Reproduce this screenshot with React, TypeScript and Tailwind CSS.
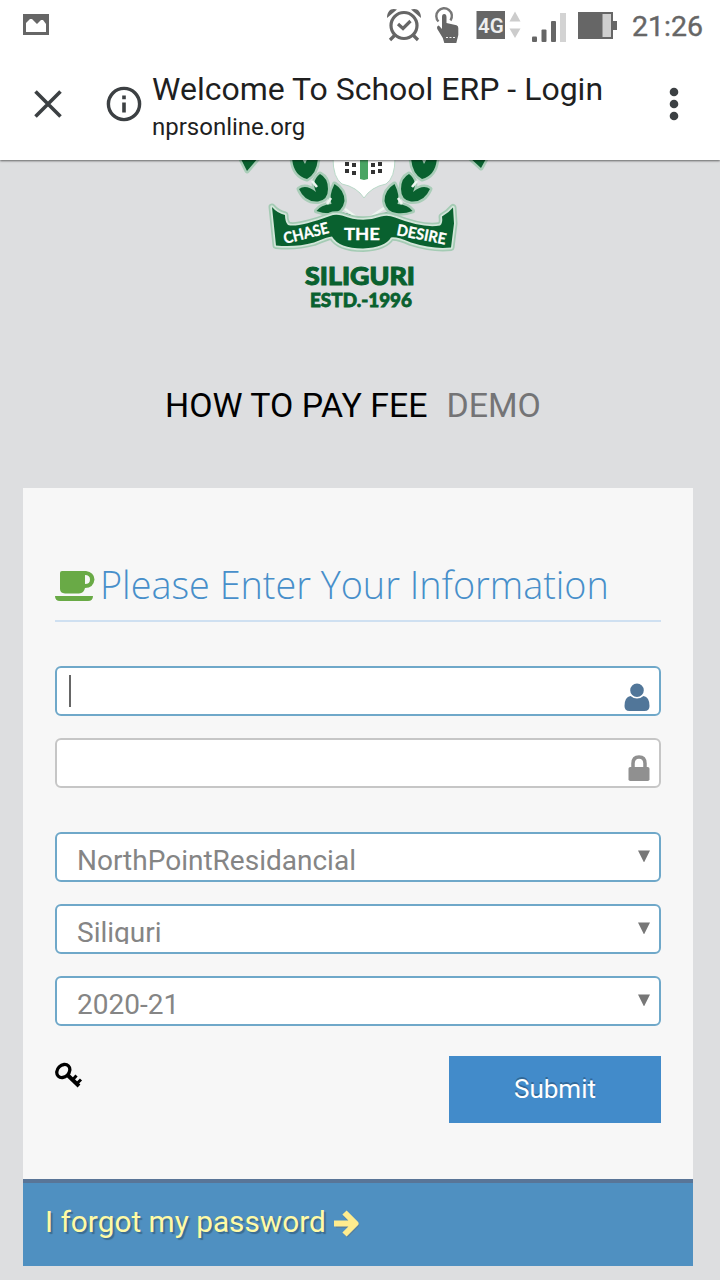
import type { ReactNode } from "react";

function StatusBar() {
  return (
    <div className="flex h-[50px] items-start text-[#666]">
      <svg className="ml-[23px] mt-[14px] h-[21px] w-[26px]" viewBox="0 0 26 21">
        <path fill="currentColor" d="M0 0h26v21H0z" />
        <path fill="#fff" d="M3 18V9l4-4h2l5 5 4-4h2l3 4v8z" />
      </svg>
      <svg className="ml-auto h-[50px] w-[236px]" viewBox="384 0 236 50">
        <g fill="none" stroke="#666" strokeWidth="3.200">
          <circle cx="404" cy="25.500" r="13" />
          <path d="m395 35-5 5M413 35l5 5" />
          <path d="m398 24 5 4.500 7.500-7.500" />
        </g>
        <path fill="#666" d="M387 18c0-7 4-10.500 10-8.500zM421 18c0-7-4-10.500-10-8.500z" />
        <path fill="none" stroke="#777" strokeWidth="2.400" d="M438.500 21.500a7.800 7.800 0 1 1 12-1" />
        <path fill="#666" d="M442 17q0-3 2.200-3t2.300 3v6l10 2.200q1.800.7 1.800 2.800v7l-2 8h-12l-1.500-5-5.500-9q-1-3 1.500-3.500l3.200 3.500z" />
        <path stroke="#eee" strokeDasharray="2 1.500" d="M446 37.500h9" />
        <path fill="#666" d="M476.500 11h28.500v28h-28.500z" />
        <text x="490.800" y="32.500" fill="#eee" fontFamily="Roboto" fontSize="20.500" fontWeight="600" textAnchor="middle">4G</text>
        <path fill="#ccc" d="m509.500 21.500 5.500-10 5.500 10zM509.500 28.500h11L515 38z" />
        <g fill="#666">
          <rect x="532" y="36.500" width="5" height="5.500" rx="1" />
          <rect x="541.500" y="29.500" width="5" height="12.500" rx="1" />
          <rect x="551" y="21" width="5" height="21" rx="1" />
        </g>
        <path fill="#d3d3d3" d="M560 13h6v29h-6z" />
        <path fill="#666" d="M578 12h35v27h-35zM613 21h4v9h-4z" />
        <path fill="#cfcfcf" d="M602.500 14h8.500v23h-8.500z" />
      </svg>
      <span className="ml-[12px] w-[88px] pt-[10px] text-[28.500px] leading-[34px] whitespace-nowrap [-webkit-text-stroke:0.400px_#666]">
        21:26
      </span>
    </div>
  );
}

function BrowserBar() {
  return (
    <div className="flex h-[110px] items-start text-[#1f1f1f]">
      <svg className="ml-[34px] mt-[40px] h-[28px] w-[28px]" viewBox="0 0 28 28">
        <path stroke="#3c4043" strokeWidth="3.600" d="m1.500 1.500 25 25M26.500 1.500l-25 25" />
      </svg>
      <svg className="ml-[44px] mt-[36px] h-[36px] w-[36px]" viewBox="0 0 36 36">
        <circle cx="18" cy="18" r="15.600" fill="none" stroke="#3c4043" strokeWidth="3.400" />
        <path fill="#3c4043" d="M16.200 9.500h3.600v3.700h-3.600zM16.200 16.500h3.600v10h-3.600z" />
      </svg>
      <div className="ml-[10px] flex flex-col whitespace-nowrap">
        <span className="mt-[20px] h-[38px] text-[32px] leading-[38px]">Welcome To School ERP - Login</span>
        <span className="mt-[4px] text-[24px] leading-[30px]">nprsonline.org</span>
      </div>
      <svg className="ml-auto mr-[41px] mt-[37px] h-[34px] w-[10px]" viewBox="0 0 10 34">
        <g fill="#3c4043">
          <circle cx="5" cy="5" r="4.300" />
          <circle cx="5" cy="17" r="4.300" />
          <circle cx="5" cy="29" r="4.300" />
        </g>
      </svg>
    </div>
  );
}

function Branch() {
  return (
    <>
      <path d="M292 155q0 20 15 24 11-6 11-24h-9l-4 9-5-9z" />
      <path d="M299 189q7-5 17 3-5-11 4-18 8 4 8 15 0 11-10 12.500-13 1-19-12.500z" />
      <path d="M334.500 184q10 6 10 17-2 11-12 12-8 1-16-2 4-6 15-7-3-8 3-20z" />
    </>
  );
}

function Crest() {
  return (
    <svg className="h-[155px] w-[260px]" viewBox="230 160 260 155">
      <path fill="#fff" stroke="#b9d9c8" d="M333 158q0 20 9 26 15 3 22 14 7-11 22-14 9-6 9-26z" />
      <path fill="#4aa564" d="M360 158h8v21l-4 1-4-1z" />
      <g fill="#333">
        <path d="M345 162h4v4h-4zM352 163h4v4h-4zM345 169h4v4h-4zM352 171h4v4h-4zM371 163h4v4h-4zM378 162h4v4h-4zM371 170h4v4h-4zM378 169h4v4h-4z" />
      </g>
      <g fill="#09612f" stroke="#a9cdb8" strokeWidth="5" paintOrder="stroke" strokeLinejoin="round">
        <path d="m240 157 7 14 12-14zM487 157l-6 11-12-11z" />
        <Branch />
        <g transform="matrix(-1 0 0 1 729 0)">
          <Branch />
        </g>
      </g>
      <path fill="#09612f" d="m341 212 12 3 6 6-8-1zM388 212l-12 3-8 6 9-1z" />
      <path fill="none" stroke="#eef6f0" strokeWidth="2.600" d="m345 209 18 13 21-14M312 181l5 6M331 198l-4 6M417 181l-5 6M398 198l4 6" />
      <path
        fill="#09612f"
        stroke="#a4cbb4"
        strokeWidth="7"
        paintOrder="stroke"
        strokeLinejoin="round"
        d="M272 207q5 6 13 8 0 7 3 10 9 3 42-9 5-2 12-.500 20 8 39 1 7-2 14 1 28 11 45 8 3-2 2-9 7-4 11-9l1 16-3 24q-18 2-40-5-14-6-20-5-6 10-28 11-24 0-31-12-4 0-18 6-18 5-38 3z"
      />
      <path
        fill="#09612f"
        stroke="#d3e6da"
        strokeWidth="3.500"
        paintOrder="stroke"
        strokeLinejoin="round"
        d="M272 207q5 6 13 8 0 7 3 10 9 3 42-9 5-2 12-.500 20 8 39 1 7-2 14 1 28 11 45 8 3-2 2-9 7-4 11-9l1 16-3 24q-18 2-40-5-14-6-20-5-6 10-28 11-24 0-31-12-4 0-18 6-18 5-38 3z"
      />
      <g fill="#fff" stroke="#fff" strokeWidth=".3" fontFamily="Lato, sans-serif" fontWeight="700" fontSize="15.500">
        <text transform="translate(285 244) rotate(-14)" textLength="46" lengthAdjust="spacingAndGlyphs">CHASE</text>
        <text x="344" y="240" fontSize="17" textLength="36" lengthAdjust="spacingAndGlyphs">THE</text>
        <text transform="translate(396 235) rotate(11)" textLength="50" lengthAdjust="spacingAndGlyphs">DESIRE</text>
      </g>
      <g fill="#09612f" stroke="#09612f" fontFamily="Lato, sans-serif" fontWeight="900">
        <text x="305" y="284.500" fontSize="25" strokeWidth="1" textLength="110" lengthAdjust="spacingAndGlyphs">SILIGURI</text>
        <text x="310" y="306.500" fontSize="19.500" strokeWidth=".8" textLength="102" lengthAdjust="spacingAndGlyphs">ESTD.-1996</text>
      </g>
    </svg>
  );
}

function Field({ tone, children }: { tone: string; children: ReactNode }) {
  return <div className={`flex h-[50px] items-start rounded-md border-2 bg-white ${tone}`}>{children}</div>;
}

function SelectField({ value, clip = "h-[36px]" }: { value: string; clip?: string }) {
  return (
    <Field tone="border-[#6fa8c9]">
      <span className={`ml-[20px] mt-[9px] text-[28px] leading-[36px] whitespace-nowrap text-[#858585] ${clip}`}>
        {value}
      </span>
      <svg className="ml-auto mr-[9px] mt-[16px] h-[12px] w-[12px]" viewBox="0 0 12 12">
        <path fill="#777" d="M0 .5h12L6 12.500z" />
      </svg>
    </Field>
  );
}

function LoginCard() {
  return (
    <div className="ml-[23px] mt-[62px] w-[670px] bg-[#f7f7f7]">
      <div className="h-[691px] px-[32px] pt-[70px]">
        <div className="flex h-[64px] items-start border-b-2 border-[#cfe0f1]">
          <svg className="mt-[13px] h-[31px] w-[40px]" viewBox="0 0 40 31">
            <path
              fill="#69aa46"
              fillRule="evenodd"
              d="M5 2q0-2 2-2h24q8 1 8.500 8.500Q38.500 17 30 17q-1 5-6 5.500H10Q5 22 5 18zM30 4v9q5 0 5-4.500T30 4zM0 25h38q0 5-5 5H5q-5 0-5-5z"
            />
          </svg>
          <h4 className="ml-[5px] font-['Open_Sans'] text-[37.800px] font-light leading-[53px] whitespace-nowrap text-[#478fca]">
            Please Enter Your Information
          </h4>
        </div>
        <div className="mt-[44px] flex flex-col gap-[22px]">
          <Field tone="border-[#6fa8c9]">
            <span className="ml-[12px] mt-[7px] h-[32px] w-[2px] bg-[#666]" />
            <svg className="ml-auto mr-[9px] mt-[15px] h-[28px] w-[26px]" viewBox="0 0 26 28">
              <path
                fill="#517699"
                d="M13 .5a6.800 6.800 0 1 1 0 13.600 6.800 6.800 0 0 1 0-13.600zM6.500 13q6.500 5 13 0Q25.500 14 25.500 23q0 5-5 5h-15q-5 0-5-5 0-9 6-10z"
              />
            </svg>
          </Field>
          <Field tone="border-[#c6c6c6]">
            <svg className="ml-auto mr-[9px] mt-[15px] h-[26px] w-[22px]" viewBox="0 0 22 26">
              <path fill="none" stroke="#909090" strokeWidth="3.500" d="M5 13V8.500q0-6.500 6-6.500t6 6.500V13" />
              <rect x=".5" y="12" width="21" height="14" rx="1.800" fill="#909090" />
            </svg>
          </Field>
        </div>
        <div className="mt-[44px] flex flex-col gap-[22px]">
          <SelectField value="NorthPointResidancial" />
          <SelectField value="Siliguri" clip="h-[29px] overflow-hidden" />
          <SelectField value="2020-21" />
        </div>
        <div className="mt-[30px] flex items-start justify-between">
          <svg className="mt-[6px] h-[27px] w-[28px]" viewBox="0 0 28 27">
            <g fill="none" stroke="#000">
              <ellipse cx="8.300" cy="9" rx="7.200" ry="5.800" strokeWidth="3.300" transform="rotate(-45 8.300 9)" />
              <path strokeWidth="4" d="m12 12.500 12 11.500" />
              <path strokeWidth="3" d="m17.500 18 4-4.500M21.500 22l4.500-4.500" />
            </g>
          </svg>
          <button className="h-[67px] w-[212px] bg-[#428bca] text-[26px] leading-[67px] text-white [text-shadow:0_-2px_0_rgba(0,0,0,0.25)]">
            Submit
          </button>
        </div>
      </div>
      <div className="flex h-[87px] items-start border-t-4 border-[#597597] bg-[#4f90c1] pl-[22px] text-[#fffaa5]">
        <span className="mt-[21px] text-[29.800px] leading-[36px] whitespace-nowrap [text-shadow:2px_2px_1px_rgba(0,0,0,0.25)]">
          I forgot my password
        </span>
        <svg className="ml-[7px] mt-[26px] h-[30px] w-[28px]" viewBox="0 0 28 30">
          <g fill="none" strokeWidth="6" strokeLinejoin="round">
            <path stroke="#666" strokeOpacity=".35" d="M3 16h18M12.500 5.500 23 16 12.500 26.500" />
            <path stroke="#ffec8e" d="M1 14.500h20M11.500 3.500l11 11-11 11" />
          </g>
        </svg>
      </div>
    </div>
  );
}

export default function App() {
  return (
    <div className="h-[1280px] w-[720px] overflow-hidden bg-[#dddee0] font-['Roboto',sans-serif]">
      <header className="relative h-[160px] bg-white shadow-[0_1px_2px_rgba(0,0,0,0.55)]">
        <StatusBar />
        <BrowserBar />
      </header>
      <main>
        <div className="flex pl-[230px]">
          <Crest />
        </div>
        <div className="mt-[71px] flex h-[40px] items-center pl-[165px] text-[33.900px] leading-[40px] whitespace-nowrap text-black">
          <span>HOW TO PAY FEE</span>
          <span className="ml-[19px] text-[#747476]">DEMO</span>
        </div>
        <LoginCard />
      </main>
    </div>
  );
}
